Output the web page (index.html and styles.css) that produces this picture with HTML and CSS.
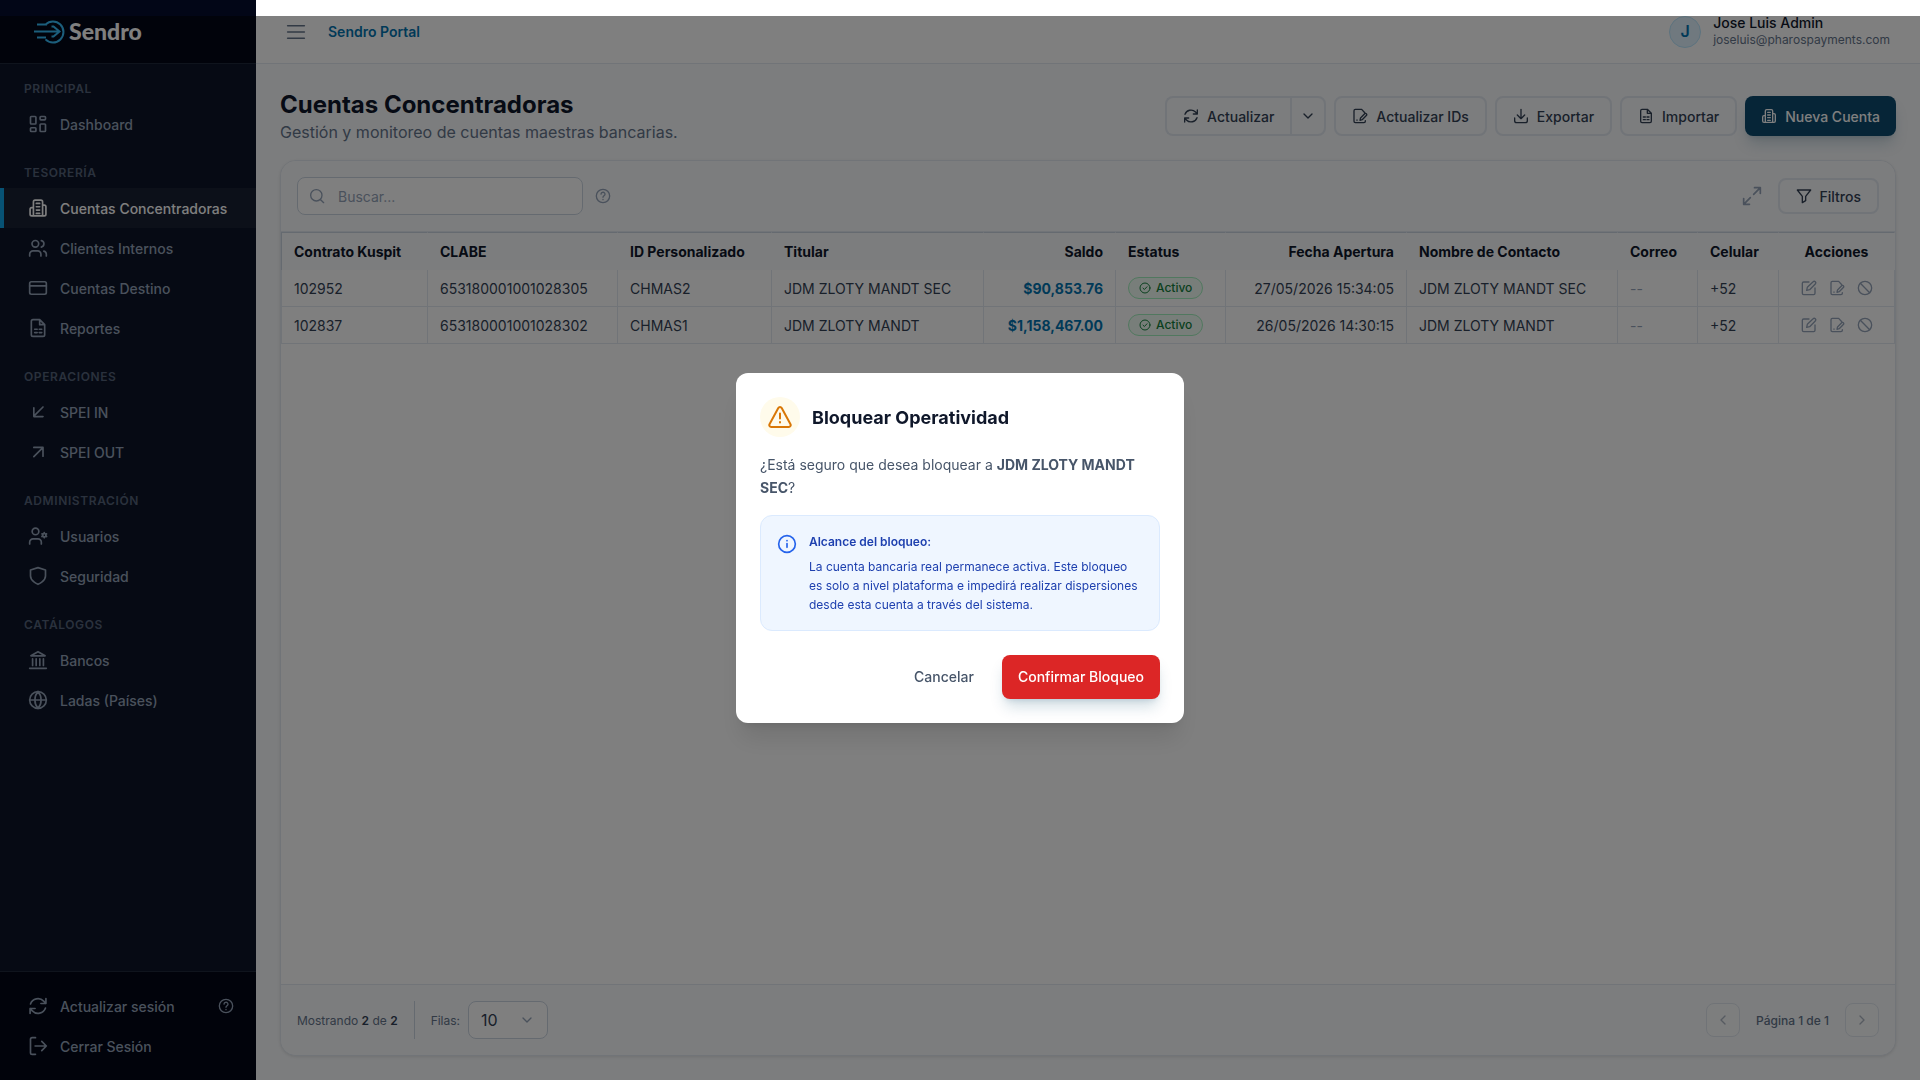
FILE: index.html
```html
<!DOCTYPE html>
<html lang="es">
<head>
  <meta charset="UTF-8">
  <meta name="viewport" content="width=device-width, initial-scale=1.0">
  <title>Sendro Portal - Cuentas Concentradoras</title>
  <link rel="stylesheet" href="styles.css">
</head>
<body>
  <!-- Icons -->
  <svg class="sprite" aria-hidden="true">
    <symbol id="i-dashboard" viewBox="0 0 24 24"><rect x="3" y="3" width="6.5" height="9" rx="1"/><rect x="14.5" y="3" width="6.5" height="4" rx="1"/><rect x="3" y="16.5" width="6.5" height="4.5" rx="1"/><rect x="14.5" y="12" width="6.5" height="9" rx="1"/></symbol>
    <symbol id="i-building" viewBox="0 0 24 24"><path d="M6.5 21.5v-17a2 2 0 0 1 2-2h7a2 2 0 0 1 2 2v17zM6.5 11.5h-2a2 2 0 0 0-2 2v6a2 2 0 0 0 2 2h2M17.500 8.500h2a2 2 0 0 1 2 2v9a2 2 0 0 1-2 2h-2M10 6.500h4M10 10.500h4M10 14.500h4M10 18.500h4"/></symbol>
    <symbol id="i-users" viewBox="0 0 24 24"><circle cx="8.800" cy="7" r="4"/><path d="M2 21.500v-2a4 4 0 0 1 4-4h5.500a4 4 0 0 1 4 4v2M16 3.100a4 4 0 0 1 0 7.800M22 21.500v-2a4 4 0 0 0-3-3.800"/></symbol>
    <symbol id="i-card" viewBox="0 0 24 24"><rect x="2" y="4.500" width="20" height="15" rx="2"/><path d="M2 9.500h20"/></symbol>
    <symbol id="i-report" viewBox="0 0 24 24"><path d="M14 2H6a2 2 0 0 0-2 2v16a2 2 0 0 0 2 2h12a2 2 0 0 0 2-2V8zM14 2v6h6M8 13.500h3M13.500 13.500h3M8 17.500h3M13.500 17.500h3"/></symbol>
    <symbol id="i-in" viewBox="0 0 24 24"><path d="M18 6 7 17M7 7v10.500h11"/></symbol>
    <symbol id="i-out" viewBox="0 0 24 24"><path d="M7 17.500 17.500 7M7 6.500h11V17"/></symbol>
    <symbol id="i-usercog" viewBox="0 0 24 24"><circle cx="9" cy="6.500" r="4"/><path d="M2 21.500v-2a4 4 0 0 1 4-4h6a4 4 0 0 1 4 4v2"/><circle cx="19.500" cy="11" r="2"/><path d="M19.500 7.800V9M19.500 13v1.200M22.300 9.400l-1 .6M17.700 12l-1 .6M22.300 12.600l-1-.6M17.700 10l-1-.6"/></symbol>
    <symbol id="i-shield" viewBox="0 0 24 24"><path d="M12 22s9-3.500 9-10V4.800L12 2 3 4.800V12c0 6.500 9 10 9 10z"/></symbol>
    <symbol id="i-bank" viewBox="0 0 24 24"><path d="M2 22h20M3.500 7 12 2l8.500 5zM5.500 10.500v8M9.800 10.500v8M14.200 10.500v8M18.500 10.500v8"/></symbol>
    <symbol id="i-globe" viewBox="0 0 24 24"><circle cx="12" cy="12" r="10"/><path d="M2 12h20M12 2c5 5.500 5 14.500 0 20M12 2c-5 5.500-5 14.500 0 20"/></symbol>
    <symbol id="i-refresh" viewBox="0 0 24 24"><path d="M21.500 3v6h-6M2.500 21v-6h6M3 9.500a9.500 9.500 0 0 1 15.800-3.400L21.500 9M21 14.500a9.500 9.500 0 0 1-15.800 3.400L2.500 15"/></symbol>
    <symbol id="i-logout" viewBox="0 0 24 24"><path d="M9 2H5a2 2 0 0 0-2 2v16a2 2 0 0 0 2 2h4M8.500 12H22M16.500 6.500 22 12l-5.500 5.500"/></symbol>
    <symbol id="i-help" viewBox="0 0 24 24"><circle cx="12" cy="12" r="10"/><path d="M9 9.200a3 3 0 0 1 6 .3c0 2-3 2.500-3 4.500M12 17v.500"/></symbol>
    <symbol id="i-menu" viewBox="0 0 24 24"><path d="M2 4.500h20M2 12h20M2 19.500h20"/></symbol>
    <symbol id="i-down" viewBox="0 0 24 24"><path d="m6 9 6 6 6-6"/></symbol>
    <symbol id="i-left" viewBox="0 0 24 24"><path d="m15 6-6 6 6 6"/></symbol>
    <symbol id="i-right" viewBox="0 0 24 24"><path d="m9 6 6 6-6 6"/></symbol>
    <symbol id="i-fileedit" viewBox="0 0 24 24"><path d="M19.500 7.500 14.500 2H5a2 2 0 0 0-2 2v16a2 2 0 0 0 2 2h13a2 2 0 0 0 2-2v-1M7.500 18v.500M12 18.500l.800-3.500 6.200-6.300a1.700 1.700 0 0 1 2.500 2.500L15.300 17.500z"/></symbol>
    <symbol id="i-download" viewBox="0 0 24 24"><path d="M2.500 15v4a3 3 0 0 0 3 3h13a3 3 0 0 0 3-3v-4M12 2v14M6.500 10.500 12 16l5.500-5.500"/></symbol>
    <symbol id="i-search" viewBox="0 0 24 24"><circle cx="11" cy="11" r="8.500"/><path d="m17.500 17.500 4.500 4.500"/></symbol>
    <symbol id="i-expand" viewBox="0 0 24 24"><path d="M15 2h7v7M22 2l-8 8M9 22H2v-7M2 22l8-8"/></symbol>
    <symbol id="i-filter" viewBox="0 0 24 24"><path d="M2 3h20l-7.500 9.500V19l-5 3v-9.500z"/></symbol>
    <symbol id="i-check" viewBox="0 0 24 24"><circle cx="12" cy="12" r="10"/><path d="m8 12.300 2.800 2.700L16 9.500"/></symbol>
    <symbol id="i-edit" viewBox="0 0 24 24"><path d="M12 3H4a2 2 0 0 0-2 2v15a2 2 0 0 0 2 2h15a2 2 0 0 0 2-2v-8M8.500 15.500l1-4.500 8.700-8.300a2 2 0 0 1 3.200 3.200L13 14.500z"/></symbol>
    <symbol id="i-ban" viewBox="0 0 24 24"><circle cx="12" cy="12" r="10"/><path d="m5 5 14 14"/></symbol>
    <symbol id="i-warning" viewBox="0 0 24 24"><path d="M10.300 3 1.500 19.200a1.900 1.900 0 0 0 1.700 2.800h17.600a1.900 1.900 0 0 0 1.700-2.800L13.700 3a1.950 1.950 0 0 0-3.400 0zM12 8.500v5M12 17v.500"/></symbol>
    <symbol id="i-info" viewBox="0 0 24 24"><circle cx="12" cy="12" r="10"/><path d="M12 11.500V16M12 7.800v.200"/></symbol>
  </svg>

  <aside class="sidebar">
    <div class="brand">
      <svg class="brand-mark" viewBox="0 0 36 28" aria-hidden="true"><path d="M13.500 6.600A10.500 10.500 0 1 1 13.500 21.400M2 13.500h25M5 6.600h10M5 19.500h9M19.500 8.500h2l6 5-6 5h-2"/></svg>
      <span class="brand-name">Sendro</span>
    </div>

    <nav class="nav">
      <section class="nav-group">
        <h2 class="nav-label">Principal</h2>
        <a class="nav-item" href="#"><svg class="icon"><use href="#i-dashboard"/></svg>Dashboard</a>
      </section>
      <section class="nav-group">
        <h2 class="nav-label">Tesorería</h2>
        <a class="nav-item active" href="#"><svg class="icon"><use href="#i-building"/></svg>Cuentas Concentradoras</a>
        <a class="nav-item" href="#"><svg class="icon"><use href="#i-users"/></svg>Clientes Internos</a>
        <a class="nav-item" href="#"><svg class="icon"><use href="#i-card"/></svg>Cuentas Destino</a>
        <a class="nav-item" href="#"><svg class="icon"><use href="#i-report"/></svg>Reportes</a>
      </section>
      <section class="nav-group">
        <h2 class="nav-label">Operaciones</h2>
        <a class="nav-item" href="#"><svg class="icon"><use href="#i-in"/></svg>SPEI IN</a>
        <a class="nav-item" href="#"><svg class="icon"><use href="#i-out"/></svg>SPEI OUT</a>
      </section>
      <section class="nav-group">
        <h2 class="nav-label">Administración</h2>
        <a class="nav-item" href="#"><svg class="icon"><use href="#i-usercog"/></svg>Usuarios</a>
        <a class="nav-item" href="#"><svg class="icon"><use href="#i-shield"/></svg>Seguridad</a>
      </section>
      <section class="nav-group">
        <h2 class="nav-label">Catálogos</h2>
        <a class="nav-item" href="#"><svg class="icon"><use href="#i-bank"/></svg>Bancos</a>
        <a class="nav-item" href="#"><svg class="icon"><use href="#i-globe"/></svg>Ladas (Países)</a>
      </section>
    </nav>

    <div class="session">
      <button type="button" class="nav-item"><svg class="icon"><use href="#i-refresh"/></svg>Actualizar sesión<svg class="icon icon-sm session-help"><use href="#i-help"/></svg></button>
      <button type="button" class="nav-item"><svg class="icon"><use href="#i-logout"/></svg>Cerrar Sesión</button>
    </div>
  </aside>

  <div class="main">
    <header class="topbar">
      <button type="button" class="menu-button" aria-label="Menú"><svg class="icon"><use href="#i-menu"/></svg></button>
      <a class="portal-name" href="#">Sendro Portal</a>
      <div class="profile">
        <span class="avatar">J</span>
        <div>
          <p class="profile-name">Jose Luis Admin</p>
          <p class="profile-email">joseluis@pharospayments.com</p>
        </div>
      </div>
    </header>

    <main class="content">
      <div class="page-head">
        <div>
          <h1>Cuentas Concentradoras</h1>
          <p class="subtitle">Gestión y monitoreo de cuentas maestras bancarias.</p>
        </div>
        <div class="actions">
          <div class="btn-group">
            <button type="button" class="btn"><svg class="icon icon-sm"><use href="#i-refresh"/></svg>Actualizar</button>
            <button type="button" class="btn btn-split" aria-label="Más opciones"><svg class="icon icon-sm"><use href="#i-down"/></svg></button>
          </div>
          <button type="button" class="btn"><svg class="icon icon-sm"><use href="#i-fileedit"/></svg>Actualizar IDs</button>
          <button type="button" class="btn"><svg class="icon icon-sm"><use href="#i-download"/></svg>Exportar</button>
          <button type="button" class="btn"><svg class="icon icon-sm"><use href="#i-report"/></svg>Importar</button>
          <button type="button" class="btn btn-primary"><svg class="icon icon-sm"><use href="#i-building"/></svg>Nueva Cuenta</button>
        </div>
      </div>

      <div class="card">
        <div class="toolbar">
          <label class="search">
            <svg class="icon icon-sm"><use href="#i-search"/></svg>
            <input type="text" placeholder="Buscar..." aria-label="Buscar">
          </label>
          <button type="button" class="icon-button" aria-label="Ayuda"><svg class="icon icon-sm"><use href="#i-help"/></svg></button>
          <button type="button" class="icon-button push" aria-label="Pantalla completa"><svg class="icon"><use href="#i-expand"/></svg></button>
          <button type="button" class="btn btn-filter"><svg class="icon icon-sm"><use href="#i-filter"/></svg>Filtros</button>
        </div>

        <div class="table-wrap">
          <table>
            <colgroup>
              <col class="c-contrato"><col class="c-clabe"><col class="c-id"><col class="c-titular"><col class="c-saldo"><col class="c-estatus"><col class="c-fecha"><col class="c-contacto"><col class="c-correo"><col class="c-celular"><col class="c-acciones">
            </colgroup>
            <thead>
              <tr>
                <th>Contrato Kuspit</th>
                <th>CLABE</th>
                <th>ID Personalizado</th>
                <th>Titular</th>
                <th class="right">Saldo</th>
                <th>Estatus</th>
                <th class="right">Fecha Apertura</th>
                <th>Nombre de Contacto</th>
                <th>Correo</th>
                <th>Celular</th>
                <th class="center">Acciones</th>
              </tr>
            </thead>
            <tbody>
              <tr>
                <td>102952</td>
                <td>653180001001028305</td>
                <td>CHMAS2</td>
                <td>JDM ZLOTY MANDT SEC</td>
                <td class="right saldo">$90,853.76</td>
                <td><span class="badge"><svg class="icon icon-xs"><use href="#i-check"/></svg>Activo</span></td>
                <td class="right">27/05/2026 15:34:05</td>
                <td>JDM ZLOTY MANDT SEC</td>
                <td class="empty">--</td>
                <td>+52</td>
                <td>
                  <div class="row-actions">
                    <button type="button" aria-label="Editar"><svg class="icon icon-sm"><use href="#i-edit"/></svg></button>
                    <button type="button" aria-label="Actualizar ID"><svg class="icon icon-sm"><use href="#i-fileedit"/></svg></button>
                    <button type="button" aria-label="Bloquear"><svg class="icon icon-sm"><use href="#i-ban"/></svg></button>
                  </div>
                </td>
              </tr>
              <tr>
                <td>102837</td>
                <td>653180001001028302</td>
                <td>CHMAS1</td>
                <td>JDM ZLOTY MANDT</td>
                <td class="right saldo">$1,158,467.00</td>
                <td><span class="badge"><svg class="icon icon-xs"><use href="#i-check"/></svg>Activo</span></td>
                <td class="right">26/05/2026 14:30:15</td>
                <td>JDM ZLOTY MANDT</td>
                <td class="empty">--</td>
                <td>+52</td>
                <td>
                  <div class="row-actions">
                    <button type="button" aria-label="Editar"><svg class="icon icon-sm"><use href="#i-edit"/></svg></button>
                    <button type="button" aria-label="Actualizar ID"><svg class="icon icon-sm"><use href="#i-fileedit"/></svg></button>
                    <button type="button" aria-label="Bloquear"><svg class="icon icon-sm"><use href="#i-ban"/></svg></button>
                  </div>
                </td>
              </tr>
            </tbody>
          </table>
        </div>

        <div class="card-footer">
          <p class="count">Mostrando <strong>2</strong> de <strong>2</strong></p>
          <div class="rows">
            <label for="rows">Filas:</label>
            <div class="select">
              <select id="rows">
                <option>10</option>
                <option>25</option>
                <option>50</option>
              </select>
              <svg class="icon icon-sm"><use href="#i-down"/></svg>
            </div>
          </div>
          <div class="pager">
            <button type="button" disabled aria-label="Anterior"><svg class="icon icon-sm"><use href="#i-left"/></svg></button>
            <span>Página 1 de 1</span>
            <button type="button" disabled aria-label="Siguiente"><svg class="icon icon-sm"><use href="#i-right"/></svg></button>
          </div>
        </div>
      </div>
    </main>
  </div>

  <div class="overlay">
    <div class="dialog" role="dialog" aria-modal="true" aria-labelledby="dialog-title">
      <div class="dialog-head">
        <span class="dialog-icon"><svg class="icon icon-lg"><use href="#i-warning"/></svg></span>
        <h3 id="dialog-title">Bloquear Operatividad</h3>
      </div>
      <p class="dialog-text">¿Está seguro que desea bloquear a <strong>JDM ZLOTY MANDT SEC</strong>?</p>
      <div class="notice">
        <svg class="icon"><use href="#i-info"/></svg>
        <div>
          <p class="notice-title">Alcance del bloqueo:</p>
          <p class="notice-text">La cuenta bancaria real permanece activa. Este bloqueo es solo a nivel plataforma e impedirá realizar dispersiones desde esta cuenta a través del sistema.</p>
        </div>
      </div>
      <div class="dialog-actions">
        <button type="button" class="btn-cancel">Cancelar</button>
        <button type="button" class="btn-danger">Confirmar Bloqueo</button>
      </div>
    </div>
  </div>
</body>
</html>
```

FILE: styles.css
```css
* {
  margin: 0;
  padding: 0;
  box-sizing: border-box;
}

body {
  display: flex;
  min-height: 100vh;
  font-family: Inter, "Liberation Sans", sans-serif;
  font-size: 14px;
  line-height: 21px;
  color: #334155;
  background-color: #f8fafc;
}

button,
input,
select {
  font: inherit;
  color: inherit;
}

button {
  border: none;
  background: none;
  cursor: pointer;
}

a {
  color: inherit;
  text-decoration: none;
}

.sprite {
  position: absolute;
  width: 0;
  height: 0;
}

.icon {
  display: block;
  flex-shrink: 0;
  width: 20px;
  height: 20px;
  fill: none;
  stroke: currentColor;
  stroke-width: 2;
  stroke-linecap: round;
  stroke-linejoin: round;
}

.icon-xs {
  width: 12px;
  height: 12px;
}

.icon-sm {
  width: 16px;
  height: 16px;
}

.icon-lg {
  width: 24px;
  height: 24px;
}

/* Sidebar */
.sidebar {
  display: flex;
  flex-direction: column;
  flex-shrink: 0;
  width: 256px;
  background-color: #0d1528;
  color: #94a3b8;
}

.brand {
  display: flex;
  align-items: center;
  gap: 1px;
  height: 64px;
  padding-left: 32px;
  background-color: #020617;
  border-bottom: 1px solid #1e293b;
}

.brand-mark {
  width: 36px;
  height: 28px;
  fill: none;
  stroke: #38bdf8;
  stroke-width: 2;
}

.brand-name {
  font-family: Lato, sans-serif;
  font-size: 23px;
  font-weight: 900;
  color: #fff;
}

.nav {
  flex: 1;
  display: flex;
  flex-direction: column;
  gap: 20px;
  padding: 16px 0;
}

.nav-label {
  margin-bottom: 6px;
  padding: 0 24px;
  font-size: 12px;
  line-height: 18px;
  font-weight: 600;
  letter-spacing: 0.05em;
  text-transform: uppercase;
  color: #55637a;
}

.nav-item {
  display: flex;
  align-items: center;
  gap: 12px;
  width: 100%;
  height: 40px;
  padding: 0 22px 0 24px;
  border-left: 4px solid transparent;
  font-weight: 500;
}

.nav-item.active {
  background-color: rgba(255, 255, 255, 0.05);
  border-left-color: #0ea5e9;
  color: #fff;
}

.session {
  padding: 14px 0;
  background-color: #020617;
  border-top: 1px solid #1e293b;
}

.session-help {
  margin-left: auto;
}

/* Top bar */
.main {
  flex: 1;
  display: flex;
  flex-direction: column;
  min-width: 0;
}

.topbar {
  display: flex;
  align-items: center;
  gap: 22px;
  height: 64px;
  padding: 0 30px;
  background-color: #fff;
  border-bottom: 1px solid #e2e8f0;
}

.menu-button {
  color: #64748b;
}

.portal-name {
  font-weight: 600;
  color: #0374b0;
}

.profile {
  display: flex;
  align-items: center;
  gap: 12px;
  margin-left: auto;
}

.avatar {
  display: flex;
  align-items: center;
  justify-content: center;
  width: 32px;
  height: 32px;
  border: 1px solid #bae6fd;
  border-radius: 50%;
  background-color: #e0f2fe;
  font-size: 16px;
  font-weight: 600;
  color: #0374b0;
}

.profile-name {
  line-height: 17px;
  font-weight: 500;
  color: #0f172a;
}

.profile-email {
  font-size: 12px;
  line-height: 18px;
  color: #64748b;
}

/* Page */
.content {
  flex: 1;
  display: flex;
  flex-direction: column;
  gap: 16px;
  padding: 24px;
}

.page-head {
  display: flex;
  align-items: center;
  justify-content: space-between;
}

h1 {
  font-size: 24px;
  line-height: 33px;
  font-weight: 700;
  color: #0f172a;
}

.subtitle {
  font-size: 16px;
  line-height: 23px;
  color: #64748b;
}

.actions {
  display: flex;
  gap: 8px;
}

.btn {
  display: flex;
  align-items: center;
  gap: 8px;
  height: 40px;
  padding: 0 16px;
  border: 2px solid #e2e8f0;
  border-radius: 8px;
  font-weight: 500;
  color: #334155;
}

.btn-group {
  display: flex;
}

.btn-group .btn:first-child {
  border-right: none;
  border-radius: 8px 0 0 8px;
}

.btn-group .btn-split {
  padding: 0 8px;
  border-radius: 0 8px 8px 0;
}

.btn-primary {
  border: none;
  background-color: #0c4a6e;
  color: #fff;
  box-shadow: 0 10px 15px -3px rgba(12, 74, 110, 0.2), 0 4px 6px -4px rgba(12, 74, 110, 0.2);
}

.btn-filter {
  height: 36px;
}

.card {
  flex: 1;
  display: flex;
  flex-direction: column;
  overflow: hidden;
  border: 1px solid #e2e8f0;
  border-radius: 16px;
  background-color: #fff;
  box-shadow: 0 1px 3px rgba(0, 0, 0, 0.1);
}

.toolbar {
  display: flex;
  align-items: center;
  gap: 12px;
  padding: 16px;
  background-color: #f8fafc;
  border-bottom: 1px solid #e2e8f0;
}

.search {
  display: flex;
  align-items: center;
  gap: 13px;
  width: 286px;
  height: 38px;
  padding: 0 11px;
  border: 1px solid #cbd5e1;
  border-radius: 8px;
  background-color: #fff;
  color: #94a3b8;
}

.search input {
  flex: 1;
  min-width: 0;
  border: none;
  outline: none;
  background: none;
}

.search input::placeholder {
  color: #94a3b8;
}

.icon-button {
  color: #94a3b8;
}

.icon-button.push {
  margin-left: auto;
  margin-right: 4px;
}

/* Table */
.table-wrap {
  flex: 1;
}

table {
  width: 100%;
  table-layout: fixed;
  border-collapse: separate;
  border-spacing: 0;
}

.c-contrato { width: 147px; }
.c-clabe { width: 190px; }
.c-id { width: 154px; }
.c-titular { width: 212px; }
.c-saldo { width: 132px; }
.c-estatus { width: 110px; }
.c-fecha { width: 181px; }
.c-contacto { width: 211px; }
.c-correo { width: 80px; }
.c-celular { width: 81px; }
.c-acciones { width: 116px; }

th,
td {
  padding: 7px 12px;
  text-align: left;
  white-space: nowrap;
}

th {
  padding: 8px 12px;
  background-color: #f8fafc;
  border-top: 1px solid #cbd5e1;
  border-right: 1px solid #f8fafc;
  font-weight: 700;
  color: #0f172a;
}

th:first-child {
  border-left: 1px solid #cbd5e1;
}

td {
  border-right: 1px solid #e2e8f0;
  border-bottom: 1px solid #e2e8f0;
}

td:first-child {
  border-left: 1px solid #e2e8f0;
}

.right {
  text-align: right;
}

.center {
  text-align: center;
}

.saldo {
  font-weight: 700;
  color: #0374b0;
}

.empty {
  color: #94a3b8;
}

.badge {
  display: flex;
  align-items: center;
  gap: 5px;
  width: max-content;
  height: 22px;
  padding: 0 10px;
  border: 1px solid #a3f0be;
  border-radius: 11px;
  background-color: #f0fdf4;
  font-size: 12px;
  line-height: 20px;
  font-weight: 500;
  color: #15803d;
}

.row-actions {
  display: flex;
  justify-content: center;
  gap: 12px;
  color: #94a3b8;
}

/* Card footer */
.card-footer {
  display: flex;
  align-items: center;
  gap: 16px;
  padding: 16px;
  background-color: #f8fafc;
  border-top: 1px solid #e2e8f0;
  font-size: 12px;
  color: #64748b;
}

.count strong {
  font-weight: 600;
  color: #334155;
}

.rows {
  display: flex;
  align-items: center;
  gap: 8px;
  padding-left: 16px;
  border-left: 1px solid #cbd5e1;
}

.select {
  position: relative;
}

.select select {
  appearance: none;
  width: 80px;
  height: 38px;
  padding: 0 12px;
  border: 1px solid #cbd5e1;
  border-radius: 8px;
  background-color: #fff;
  font-size: 16px;
  color: #334155;
}

.select .icon {
  position: absolute;
  top: 11px;
  right: 13px;
  color: #94a3b8;
  pointer-events: none;
}

.pager {
  display: flex;
  align-items: center;
  gap: 16px;
  margin-left: auto;
  font-weight: 500;
}

.pager button {
  padding: 8px;
  border: 1px solid #cbd5e1;
  border-radius: 8px;
  background-color: #fff;
}

.pager button:disabled {
  opacity: 0.5;
}

/* Confirm dialog */
.overlay {
  position: fixed;
  inset: 16px 0 0;
  display: flex;
  align-items: center;
  justify-content: center;
  background-color: rgba(0, 0, 0, 0.5);
}

.dialog {
  width: 448px;
  padding: 24px;
  border-radius: 12px;
  background-color: #fff;
  box-shadow: 0 20px 25px -5px rgba(0, 0, 0, 0.1), 0 8px 10px -6px rgba(0, 0, 0, 0.1);
}

.dialog-head {
  display: flex;
  align-items: center;
  gap: 12px;
  margin-bottom: 16px;
}

.dialog-icon {
  display: flex;
  align-items: center;
  justify-content: center;
  width: 40px;
  height: 40px;
  border-radius: 50%;
  background-color: #fffbeb;
  color: #d97706;
}

.dialog h3 {
  font-size: 18px;
  line-height: 27px;
  font-weight: 700;
  color: #0f172a;
}

.dialog-text {
  margin-bottom: 16px;
  line-height: 23px;
  color: #475569;
}

.notice {
  display: flex;
  gap: 12px;
  margin-bottom: 24px;
  padding: 16px;
  border: 1px solid #dbeafe;
  border-radius: 12px;
  background-color: #eff6ff;
  font-size: 12px;
  color: #1e40af;
}

.notice .icon {
  margin-top: 2px;
  color: #2563eb;
}

.notice-title {
  margin-bottom: 5px;
  line-height: 20px;
  font-weight: 600;
}

.notice-text {
  line-height: 19px;
}

.dialog-actions {
  display: flex;
  justify-content: flex-end;
  gap: 12px;
}

.btn-cancel,
.btn-danger {
  height: 44px;
  padding: 0 16px;
  border-radius: 8px;
  line-height: 20px;
  font-weight: 500;
  color: #475569;
}

.btn-danger {
  background-color: #dc2626;
  color: #fff;
  box-shadow: 0 10px 15px -3px rgba(12, 74, 110, 0.2), 0 4px 6px -4px rgba(12, 74, 110, 0.2);
}
```
